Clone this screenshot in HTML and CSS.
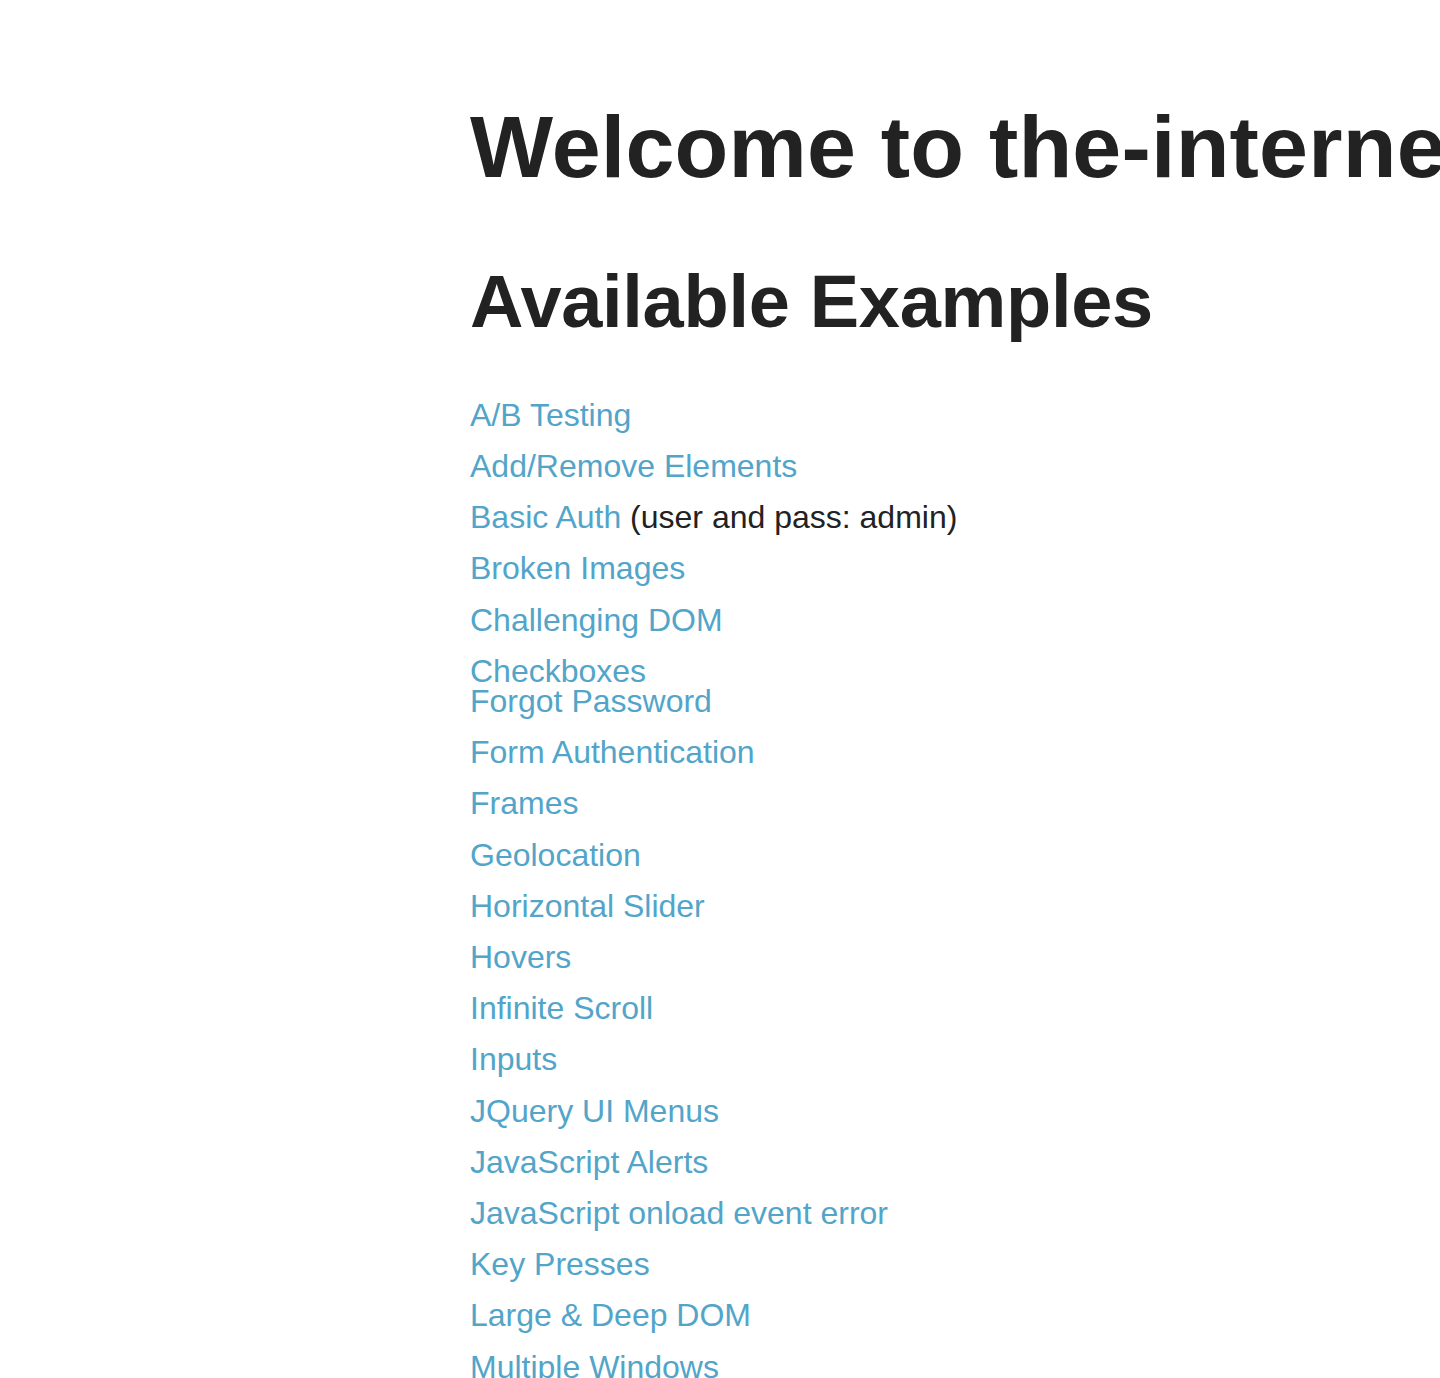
FILE: index.html
```html
<!DOCTYPE html>
<html lang="en">
<head>
<meta charset="utf-8">
<title>The Internet</title>
<link rel="stylesheet" href="styles.css">
</head>
<body>
<div class="page">
  <h1 class="title">Welcome to the-internet</h1>
  <h2 class="subtitle">Available Examples</h2>
  <ul class="examples">
    <li><a href="#">A/B Testing</a></li>
    <li><a href="#">Add/Remove Elements</a></li>
    <li><a href="#">Basic Auth</a> (user and pass: admin)</li>
    <li><a href="#">Broken Images</a></li>
    <li><a href="#">Challenging DOM</a></li>
    <li class="tight"><a href="#">Checkboxes</a></li>
    <li><a href="#">Forgot Password</a></li>
    <li><a href="#">Form Authentication</a></li>
    <li><a href="#">Frames</a></li>
    <li><a href="#">Geolocation</a></li>
    <li><a href="#">Horizontal Slider</a></li>
    <li><a href="#">Hovers</a></li>
    <li><a href="#">Infinite Scroll</a></li>
    <li><a href="#">Inputs</a></li>
    <li><a href="#">JQuery UI Menus</a></li>
    <li><a href="#">JavaScript Alerts</a></li>
    <li><a href="#">JavaScript onload event error</a></li>
    <li><a href="#">Key Presses</a></li>
    <li><a href="#">Large &amp; Deep DOM</a></li>
    <li><a href="#">Multiple Windows</a></li>
    <li><a href="#">Nested Frames</a></li>
    <li><a href="#">Notification Messages</a></li>
  </ul>
</div>
</body>
</html>
```

FILE: styles.css
```css
html, body {
  margin: 0;
  padding: 0;
  background: #ffffff;
  overflow: hidden;
}

body {
  font-family: "Liberation Sans", Arial, Helvetica, sans-serif;
  color: #222222;
  font-size: 32px;
  line-height: 1.6;
}

.page {
  padding-left: 470px;
  padding-top: 85px;
}

.title {
  margin: 0 0 42px 0;
  font-size: 88px;
  font-weight: bold;
  line-height: 1.4;
  white-space: nowrap;
  letter-spacing: 0.2px;
  color: #222222;
}

.subtitle {
  margin: 0 0 36px 0;
  font-size: 74px;
  font-weight: bold;
  line-height: 1.4;
  letter-spacing: -0.3px;
  white-space: nowrap;
  color: #222222;
}

.examples {
  list-style: none;
  margin: 0;
  padding: 0;
}

.examples li {
  margin: 0;
  line-height: 51.2px;
  white-space: nowrap;
}

.examples li.tight {
  margin-bottom: -21px;
}

.examples a {
  color: #52a5c9;
  text-decoration: none;
}
```
